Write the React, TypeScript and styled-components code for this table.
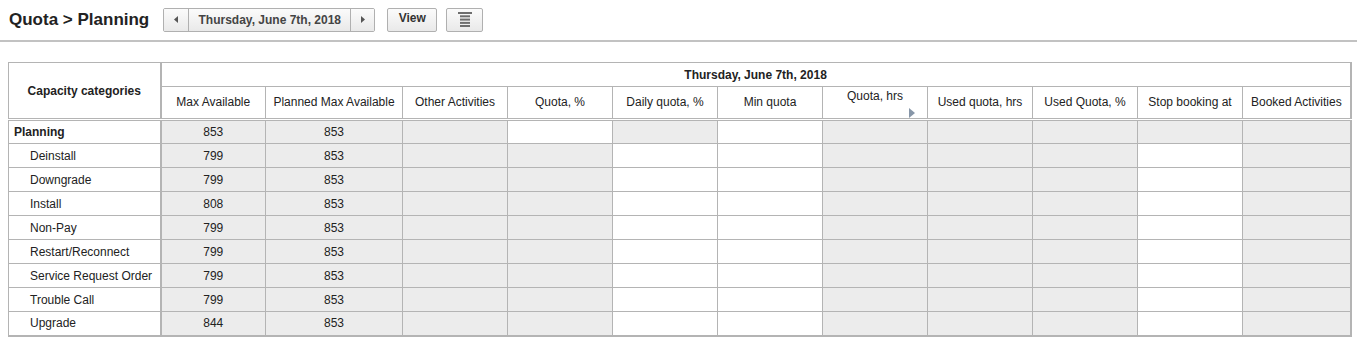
import React from "react";
import styled, { createGlobalStyle } from "styled-components";

const GlobalStyle = createGlobalStyle`
  body {
    margin: 0;
    background: #ffffff;
    font-family: Arial, "Liberation Sans", sans-serif;
    color: #222;
  }
`;

const Page = styled.div`
  display: flex;
  flex-direction: column;
`;

const Toolbar = styled.div`
  height: 40px;
  display: flex;
  align-items: center;
  padding: 0 9px;
  gap: 12px;
  border-bottom: 2px solid #c2c2c2;
  box-sizing: content-box;
`;

const Title = styled.h1`
  margin: 0 2px 1px 0;
  font-size: 17px;
  font-weight: bold;
  color: #222;
`;

const Segmented = styled.div`
  display: flex;
  height: 24px;
  box-sizing: border-box;
  border: 1px solid #b0b0b0;
  border-radius: 2px;
  overflow: hidden;
  margin-top: -1px;
`;

const Segment = styled.button<{ $width: number }>`
  width: ${(p) => p.$width}px;
  height: 100%;
  margin: 0;
  padding: 0;
  border: none;
  border-left: 1px solid #b0b0b0;
  background: linear-gradient(#fbfbfb, #e9e9e9);
  font-family: Arial, "Liberation Sans", sans-serif;
  font-size: 12px;
  font-weight: bold;
  color: #444;
  display: flex;
  align-items: center;
  justify-content: center;
  &:first-child {
    border-left: none;
  }
`;

const Button = styled.button<{ $width: number }>`
  width: ${(p) => p.$width}px;
  height: 24px;
  margin: -1px 0 0 0;
  padding: 0;
  border: 1px solid #b0b0b0;
  border-radius: 2px;
  background: linear-gradient(#fbfbfb, #e9e9e9);
  font-family: Arial, "Liberation Sans", sans-serif;
  font-size: 12px;
  font-weight: bold;
  color: #333;
  display: flex;
  align-items: center;
  justify-content: center;
`;

const ViewButton = styled(Button)`
  padding-bottom: 3px;
`;

const MenuButton = styled(Button)`
  margin-left: -3px;
`;

const Arrow = ({ dir }: { dir: "left" | "right" }) => (
  <svg width="4" height="7" viewBox="0 0 4 7">
    {dir === "left" ? (
      <polygon points="4,0 4,7 0,3.5" fill="#555" />
    ) : (
      <polygon points="0,0 0,7 4,3.5" fill="#555" />
    )}
  </svg>
);

const MenuIcon = () => (
  <svg width="14" height="15" viewBox="0 0 14 15">
    <rect x="0" y="0" width="14" height="2" fill="#6e6e6e" />
    <rect x="2" y="3.3" width="10" height="2" fill="#6e6e6e" />
    <rect x="2" y="6.6" width="10" height="2" fill="#6e6e6e" />
    <rect x="2" y="9.9" width="10" height="2" fill="#6e6e6e" />
    <rect x="2" y="13" width="10" height="2" fill="#6e6e6e" />
  </svg>
);

const TableWrap = styled.div`
  padding: 20px 0 0 8px;
`;

const Grid = styled.table`
  border-collapse: collapse;
  table-layout: fixed;
  width: 1342px;
  border: 1px solid #b4b4b4;
  border-right-width: 2px;
  border-bottom-width: 2px;
  font-size: 12px;
  color: #222;
`;

const HeadRow = styled.tr<{ $height: number }>`
  height: ${(p) => p.$height}px;
`;

const Head = styled.th<{ $bold?: boolean; $first?: boolean }>`
  border: 1px solid #b4b4b4;
  border-bottom: 3px double #b4b4b4;
  ${(p) => (p.$first ? "border-right-width: 2px;" : "")}
  font-weight: ${(p) => (p.$bold ? "bold" : "normal")};
  text-align: center;
  vertical-align: middle;
  padding: 0 4px ${(p) => (p.$first ? 0 : 2)}px;
  white-space: nowrap;
  overflow: hidden;
`;

const DateHead = styled.th`
  border: 1px solid #b4b4b4;
  font-weight: bold;
  text-align: center;
  padding: 1px 0 0 0;
`;

const MarkerHead = styled(Head)`
  vertical-align: top;
  padding: 2px 0 0 0;
  overflow: visible;
`;

const MarkerBox = styled.div`
  display: flex;
  flex-direction: column;
  align-items: center;
`;

const Marker = styled.div`
  align-self: flex-end;
  margin: 5px 12px -2px 0;
  width: 0;
  height: 0;
  border-top: 5px solid transparent;
  border-bottom: 5px solid transparent;
  border-left: 6px solid #8796a8;
`;

const Row = styled.tr`
  height: 24px;
`;

const NameCell = styled.td<{ $parent?: boolean }>`
  border: 1px solid #b4b4b4;
  border-right-width: 2px;
  padding: 0 0 0 ${(p) => (p.$parent ? 5 : 21)}px;
  font-weight: ${(p) => (p.$parent ? "bold" : "normal")};
  white-space: nowrap;
  overflow: hidden;
`;

const Cell = styled.td<{ $open?: boolean }>`
  border: 1px solid #b4b4b4;
  background: ${(p) => (p.$open ? "#ffffff" : "#ececec")};
  text-align: center;
  padding: 0;
`;

type Column = { title: string; width: number; parent: boolean; child: boolean };

const columns: Column[] = [
  { title: "Max Available", width: 105, parent: false, child: false },
  { title: "Planned Max Available", width: 137, parent: false, child: false },
  { title: "Other Activities", width: 105, parent: false, child: false },
  { title: "Quota, %", width: 105, parent: true, child: false },
  { title: "Daily quota, %", width: 105, parent: false, child: true },
  { title: "Min quota", width: 105, parent: true, child: true },
  { title: "Quota, hrs", width: 105, parent: false, child: false },
  { title: "Used quota, hrs", width: 105, parent: false, child: false },
  { title: "Used Quota, %", width: 105, parent: false, child: false },
  { title: "Stop booking at", width: 105, parent: false, child: true },
  { title: "Booked Activities", width: 108, parent: false, child: false },
];

const rows = [
  { name: "Planning", max: 853, planned: 853, parent: true },
  { name: "Deinstall", max: 799, planned: 853 },
  { name: "Downgrade", max: 799, planned: 853 },
  { name: "Install", max: 808, planned: 853 },
  { name: "Non-Pay", max: 799, planned: 853 },
  { name: "Restart/Reconnect", max: 799, planned: 853 },
  { name: "Service Request Order", max: 799, planned: 853 },
  { name: "Trouble Call", max: 799, planned: 853 },
  { name: "Upgrade", max: 844, planned: 853 },
];

const App = () => {
  return (
    <Page>
      <GlobalStyle />
      <Toolbar>
        <Title>Quota &gt; Planning</Title>
        <Segmented>
          <Segment $width={24}>
            <Arrow dir="left" />
          </Segment>
          <Segment $width={162}>Thursday, June 7th, 2018</Segment>
          <Segment $width={24}>
            <Arrow dir="right" />
          </Segment>
        </Segmented>
        <ViewButton $width={50}>View</ViewButton>
        <MenuButton $width={37}>
          <MenuIcon />
        </MenuButton>
      </Toolbar>
      <TableWrap>
        <Grid>
          <colgroup>
            <col style={{ width: 152 }} />
            {columns.map((c) => (
              <col key={c.title} style={{ width: c.width }} />
            ))}
          </colgroup>
          <thead>
            <HeadRow $height={24}>
              <Head $bold $first rowSpan={2}>
                Capacity categories
              </Head>
              <DateHead colSpan={columns.length}>Thursday, June 7th, 2018</DateHead>
            </HeadRow>
            <HeadRow $height={33}>
              {columns.map((c) =>
                c.title === "Quota, hrs" ? (
                  <MarkerHead key={c.title}>
                    <MarkerBox>
                      <span>{c.title}</span>
                      <Marker />
                    </MarkerBox>
                  </MarkerHead>
                ) : (
                  <Head key={c.title}>{c.title}</Head>
                )
              )}
            </HeadRow>
          </thead>
          <tbody>
            {rows.map((r) => (
              <Row key={r.name}>
                <NameCell $parent={r.parent}>{r.name}</NameCell>
                {columns.map((c, i) => (
                  <Cell key={c.title} $open={r.parent ? c.parent : c.child}>
                    {i === 0 ? r.max : i === 1 ? r.planned : ""}
                  </Cell>
                ))}
              </Row>
            ))}
          </tbody>
        </Grid>
      </TableWrap>
    </Page>
  );
};

export default App;
